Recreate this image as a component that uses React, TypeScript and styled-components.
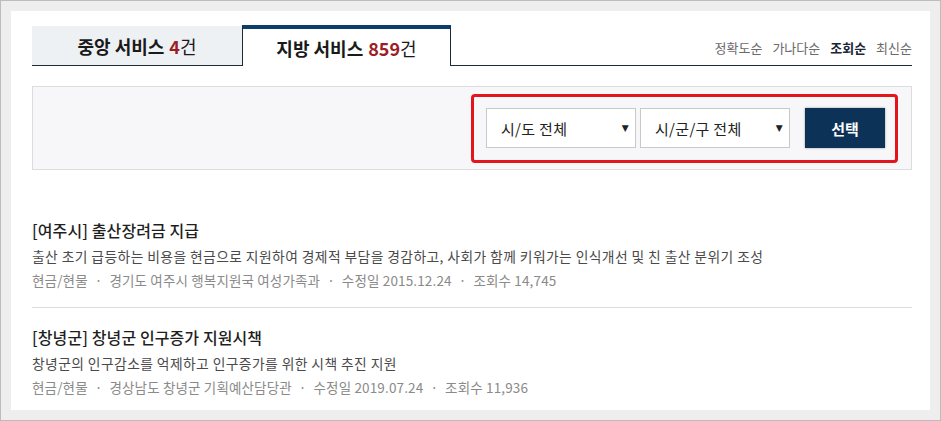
import React from "react";
import styled, { createGlobalStyle } from "styled-components";

const Global = createGlobalStyle`
  html, body { margin: 0; padding: 0; background: #fff; }
  * { box-sizing: border-box; }
  body { font-family: "Noto Sans CJK KR", "Noto Sans", sans-serif; }
`;

const Frame = styled.div`
  width: 941px;
  height: 421px;
  border: 1px solid #bcbcbc;
  background: #eeeeee;
  padding: 10px;
`;

const Panel = styled.div`
  width: 100%;
  height: 100%;
  background: #fff;
  padding: 14px 18px 0 21px;
  overflow: hidden;
`;

const TabBar = styled.div`
  display: flex;
  align-items: flex-end;
  height: 41px;
  border-bottom: 1px solid #1d2a38;
`;

const Tab = styled.div<{ $active?: boolean }>`
  display: flex;
  align-items: center;
  justify-content: center;
  font-size: 18px;
  font-weight: 700;
  color: #1a1a1a;
  ${(p) =>
    p.$active
      ? `
    width: 209px;
    height: 41px;
    margin-bottom: -1px;
    background: #fff;
    border-top: 4px solid #0b3e6d;
    border-left: 1px solid #1d2a38;
    border-right: 1px solid #1d2a38;
    padding-top: 1px;
  `
      : `
    width: 210px;
    height: 39px;
    background: #eef1f4;
    padding-top: 1px;
  `}
`;

const Count = styled.span`
  color: #9b1d25;
  margin-left: 5px;
`;

const Unit = styled.span`
  font-weight: 400;
`;

const SortList = styled.div`
  margin-left: auto;
  display: flex;
  gap: 10px;
  align-self: center;
  padding-top: 4px;
`;

const SortLink = styled.span<{ $on?: boolean }>`
  font-size: 13px;
  color: ${(p) => (p.$on ? "#1a2535" : "#6a6a6a")};
  font-weight: ${(p) => (p.$on ? 700 : 400)};
`;

const FilterBox = styled.div`
  margin-top: 20px;
  height: 84px;
  border: 1px solid #dcdcdc;
  background: #f7f7f9;
  display: flex;
  align-items: center;
  justify-content: flex-end;
  padding-right: 13px;
`;

const Highlight = styled.div`
  display: flex;
  align-items: center;
  width: 427px;
  height: 69px;
  border: 3px solid #e3141c;
  border-radius: 4px;
  padding: 0 0 0 12px;
`;

const SelectBox = styled.div<{ $gap: number }>`
  width: 150px;
  height: 40px;
  background: #fff;
  border: 1px solid #c9c9c9;
  display: flex;
  align-items: center;
  padding: 0 6px 0 14px;
  margin-right: ${(p) => p.$gap}px;
  font-size: 15px;
  letter-spacing: 0.3px;
  color: #222;
`;

const Arrow = styled.span`
  margin-left: auto;
  font-size: 9px;
  color: #222;
  font-family: "DejaVu Sans", sans-serif;
`;

const Button = styled.button`
  width: 80px;
  height: 40px;
  border: none;
  background: #0d3258;
  color: #fff;
  font-family: inherit;
  font-size: 15px;
  font-weight: 700;
  box-shadow: 0 0 2px rgba(0, 0, 0, 0.4);
`;

const List = styled.div`
  margin-top: 31px;
`;

const Item = styled.div`
  padding: 17px 0 15px;
  border-bottom: 1px solid #dddddd;
`;

const Title = styled.div`
  font-size: 16px;
  line-height: 24px;
  font-weight: 500;
  color: #1f1f1f;
  margin-bottom: 2px;
  letter-spacing: 0.1px;
`;

const Desc = styled.div`
  font-size: 13.8px;
  line-height: 24px;
  letter-spacing: 0.4px;
  color: #4a4a4a;
  white-space: nowrap;
`;

const Meta = styled.div`
  font-size: 13.5px;
  line-height: 24px;
  letter-spacing: 0.15px;
  color: #8a8a8a;
  display: flex;
  white-space: nowrap;
`;

const Dot = styled.span`
  margin: 0 7px;
`;

type Row = {
  title: string;
  desc: string;
  meta: string[];
};

const rows: Row[] = [
  {
    title: "[여주시] 출산장려금 지급",
    desc:
      "출산 초기 급등하는 비용을 현금으로 지원하여 경제적 부담을 경감하고, 사회가 함께 키워가는 인식개선 및 친 출산 분위기 조성",
    meta: ["현금/현물", "경기도 여주시 행복지원국 여성가족과", "수정일 2015.12.24", "조회수 14,745"],
  },
  {
    title: "[창녕군] 창녕군 인구증가 지원시책",
    desc: "창녕군의 인구감소를 억제하고 인구증가를 위한 시책 추진 지원",
    meta: ["현금/현물", "경상남도 창녕군 기획예산담당관", "수정일 2019.07.24", "조회수 11,936"],
  },
];

export default function App() {
  return (
    <>
      <Global />
      <Frame>
        <Panel>
          <TabBar>
            <Tab>
              중앙 서비스<Count>4</Count>
              <Unit>건</Unit>
            </Tab>
            <Tab $active>
              지방 서비스<Count>859</Count>
              <Unit>건</Unit>
            </Tab>
            <SortList>
              <SortLink>정확도순</SortLink>
              <SortLink>가나다순</SortLink>
              <SortLink $on>조회순</SortLink>
              <SortLink>최신순</SortLink>
            </SortList>
          </TabBar>
          <FilterBox>
            <Highlight>
              <SelectBox $gap={4}>
                시/도 전체<Arrow>▼</Arrow>
              </SelectBox>
              <SelectBox $gap={15}>
                시/군/구 전체<Arrow>▼</Arrow>
              </SelectBox>
              <Button>선택</Button>
            </Highlight>
          </FilterBox>
          <List>
            {rows.map((r) => (
              <Item key={r.title}>
                <Title>{r.title}</Title>
                <Desc>{r.desc}</Desc>
                <Meta>
                  {r.meta.map((m, i) => (
                    <React.Fragment key={m}>
                      {i > 0 && <Dot>·</Dot>}
                      <span>{m}</span>
                    </React.Fragment>
                  ))}
                </Meta>
              </Item>
            ))}
          </List>
        </Panel>
      </Frame>
    </>
  );
}
